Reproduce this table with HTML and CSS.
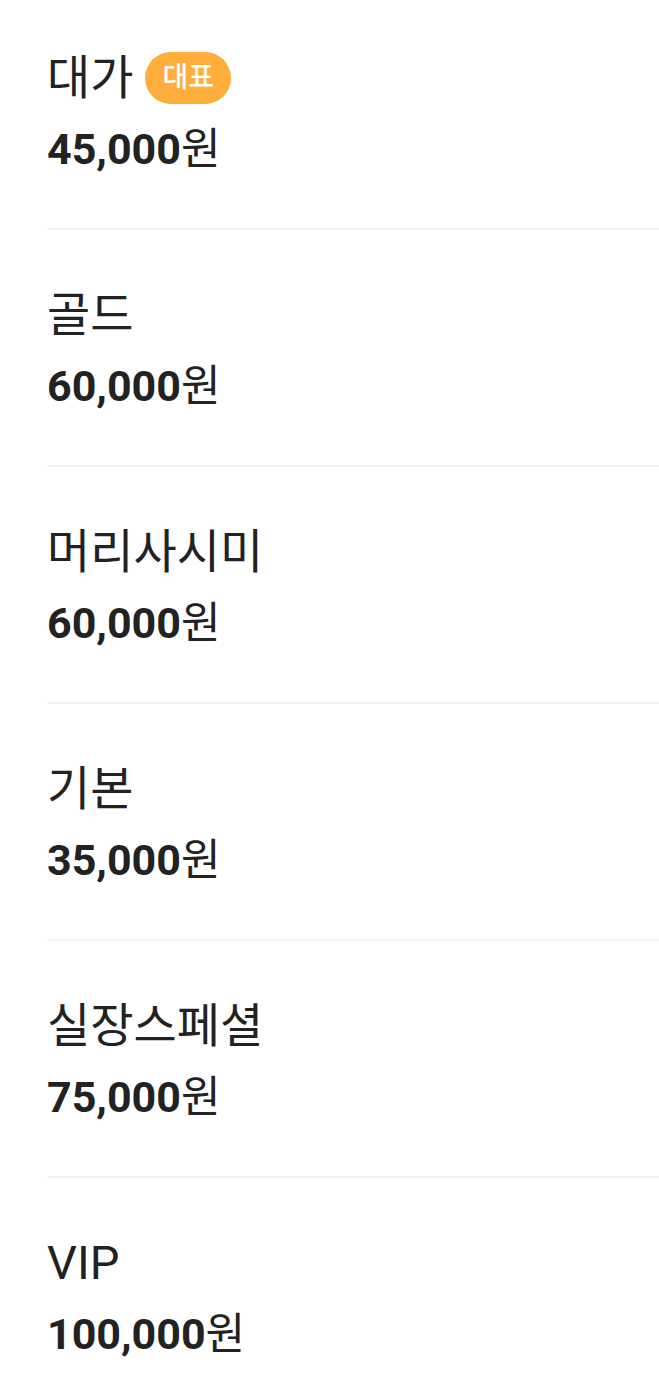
FILE: index.html
```html
<!DOCTYPE html>
<html lang="ko">
<head>
<meta charset="utf-8">
<link rel="stylesheet" href="styles.css">
</head>
<body>
<ul class="menu">
  <li class="item">
    <div class="title">대가<span class="badge">대표</span></div>
    <div class="price">45,000<span class="won">원</span></div>
  </li>
  <li class="item">
    <div class="title">골드</div>
    <div class="price">60,000<span class="won">원</span></div>
  </li>
  <li class="item">
    <div class="title">머리사시미</div>
    <div class="price">60,000<span class="won">원</span></div>
  </li>
  <li class="item">
    <div class="title">기본</div>
    <div class="price">35,000<span class="won">원</span></div>
  </li>
  <li class="item">
    <div class="title">실장스페셜</div>
    <div class="price">75,000<span class="won">원</span></div>
  </li>
  <li class="item">
    <div class="title">VIP</div>
    <div class="price">100,000<span class="won">원</span></div>
  </li>
</ul>
</body>
</html>
```
FILE: styles.css
```css
html, body {
  margin: 0;
  padding: 0;
  background: #fff;
}
body {
  font-family: Roboto, "Noto Sans CJK KR", sans-serif;
  color: #222;
}
.menu {
  list-style: none;
  margin: -7px 0 0 0;
  padding: 0 0 0 47px;
}
.item {
  display: flex;
  flex-direction: column;
  box-sizing: border-box;
  height: 237px;
  padding-top: 55px;
  border-bottom: 2px solid #f2f2f2;
}
.item:last-child {
  border-bottom: none;
}
.title {
  display: flex;
  align-items: center;
  height: 60px;
  font-size: 47px;
  line-height: 60px;
  font-weight: 400;
}
.badge {
  display: inline-flex;
  align-items: center;
  justify-content: center;
  margin-left: 12px;
  height: 52px;
  padding: 0 17px;
  border-radius: 26px;
  background: #ffae3b;
  color: #fff;
  font-size: 28px;
  font-weight: 500;
  line-height: 52px;
}
.price {
  margin-top: 13px;
  font-size: 43px;
  line-height: 56px;
  font-weight: 700;
}
.won {
  font-weight: 400;
}
```
